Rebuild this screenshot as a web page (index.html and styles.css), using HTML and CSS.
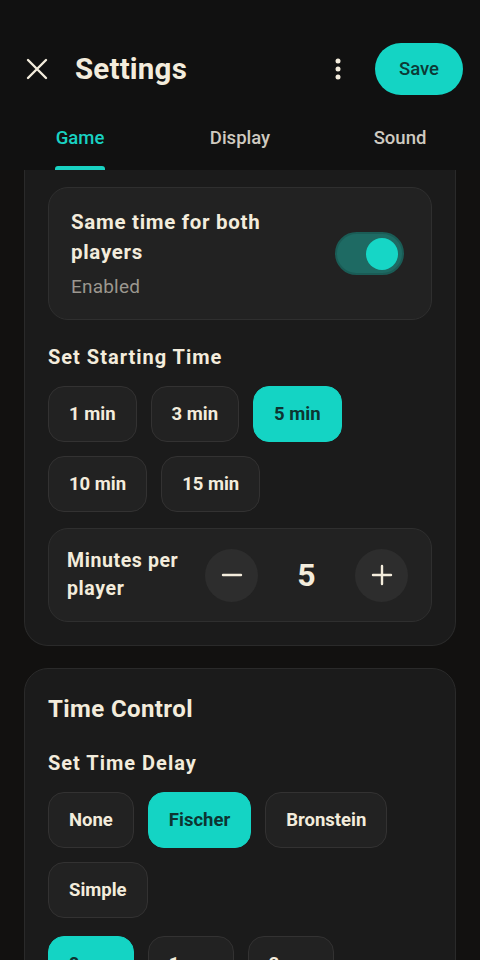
FILE: index.html
```html
<!DOCTYPE html>
<html lang="en">
<head>
  <meta charset="UTF-8" />
  <meta name="viewport" content="width=device-width, initial-scale=1.0" />
  <title>Settings</title>
  <link rel="stylesheet" href="styles.css">
</head>
<body>
  <header>
    <div class="topbar">
      <button class="icon-btn close" aria-label="Close">
        <svg width="22" height="22" viewBox="0 0 22 22"><path d="M2 2L20 20M20 2L2 20" stroke="#f3ecdc" stroke-width="2.4" stroke-linecap="round"/></svg>
      </button>
      <h1>Settings</h1>
      <button class="icon-btn more" aria-label="More">
        <svg width="8" height="24" viewBox="0 0 8 24"><circle cx="4" cy="4" r="2.5" fill="#f3ecdc"/><circle cx="4" cy="12" r="2.5" fill="#f3ecdc"/><circle cx="4" cy="20" r="2.5" fill="#f3ecdc"/></svg>
      </button>
      <button class="save">Save</button>
    </div>
    <nav class="tabs">
      <a class="tab active">Game</a>
      <a class="tab">Display</a>
      <a class="tab">Sound</a>
    </nav>
  </header>

  <main>
    <section class="card clipped">
      <div class="setting-row">
        <div>
          <p class="row-title">Same time for both players</p>
          <p class="row-sub">Enabled</p>
        </div>
        <span class="switch on"><span class="thumb"></span></span>
      </div>

      <h3>Set Starting Time</h3>
      <div class="chips">
        <button class="chip">1 min</button>
        <button class="chip">3 min</button>
        <button class="chip selected">5 min</button>
        <button class="chip">10 min</button>
        <button class="chip">15 min</button>
      </div>

      <div class="stepper">
        <p class="stepper-label">Minutes per player</p>
        <div class="stepper-controls">
          <button class="round" aria-label="Decrease">
            <svg width="22" height="22" viewBox="0 0 22 22"><path d="M2 11H20" stroke="#f3ecdc" stroke-width="2.4" stroke-linecap="round"/></svg>
          </button>
          <span class="value">5</span>
          <button class="round" aria-label="Increase">
            <svg width="22" height="22" viewBox="0 0 22 22"><path d="M2 11H20M11 2V20" stroke="#f3ecdc" stroke-width="2.4" stroke-linecap="round"/></svg>
          </button>
        </div>
      </div>
    </section>

    <section class="card">
      <h2>Time Control</h2>
      <h3>Set Time Delay</h3>
      <div class="chips">
        <button class="chip">None</button>
        <button class="chip selected">Fischer</button>
        <button class="chip">Bronstein</button>
        <button class="chip">Simple</button>
      </div>
      <div class="chips seconds">
        <button class="chip selected">0 sec</button>
        <button class="chip">1 sec</button>
        <button class="chip">2 sec</button>
      </div>
    </section>
  </main>
</body>
</html>
```

FILE: styles.css
```css
* {
  box-sizing: border-box;
}
html, body {
  height: 100%;
}
body {
  font-family: Roboto, "Liberation Sans", sans-serif;
  background-color: #121110;
  color: #f3ecdc;
  margin: 0;
  padding: 0;
  overflow: hidden;
}
button {
  font-family: inherit;
  border: none;
  background: none;
  color: inherit;
  padding: 0;
  cursor: pointer;
}
p, h1, h2, h3 {
  margin: 0;
}

header {
  background-color: #111111;
}
.topbar {
  display: flex;
  align-items: center;
  height: 110px;
  padding: 28px 17px 0 26px;
}
.icon-btn {
  display: flex;
  align-items: center;
  justify-content: center;
}
.close {
  width: 22px;
  height: 22px;
}
.topbar h1 {
  flex: 1;
  margin-left: 27px;
  font-size: 29.5px;
  font-weight: 700;
  letter-spacing: 0.2px;
}
.more {
  width: 24px;
  height: 30px;
  margin-right: 25px;
}
.save {
  width: 88px;
  height: 52px;
  border-radius: 26px;
  background-color: #14d4c4;
  color: #0c3a36;
  font-size: 18.5px;
  font-weight: 500;
}

.tabs {
  display: flex;
  height: 60px;
}
.tab {
  flex: 1;
  display: flex;
  align-items: center;
  justify-content: center;
  position: relative;
  font-size: 18.5px;
  font-weight: 500;
  color: #cfcac0;
  padding-bottom: 4px;
}
.tab.active {
  color: #19d2c2;
}
.tab.active::after {
  content: "";
  position: absolute;
  bottom: 0;
  left: 55px;
  width: 50px;
  height: 4px;
  border-radius: 3px 3px 0 0;
  background-color: #19d2c2;
}

main {
  padding: 0 24px;
}
.card {
  background-color: #1b1b1b;
  border: 1px solid #2a2a2a;
  border-radius: 24px;
  padding: 23px 23px 23px;
  margin-bottom: 22px;
}
.card.clipped {
  border-top: none;
  border-radius: 0 0 24px 24px;
  padding-top: 17px;
}
.card h2 {
  font-size: 24px;
  font-weight: 700;
  line-height: 34px;
  letter-spacing: 0.4px;
}
.card h3 {
  font-size: 20px;
  font-weight: 700;
  line-height: 26px;
  letter-spacing: 1px;
  margin: 24px 0 16px;
}

.setting-row {
  display: flex;
  align-items: center;
  justify-content: space-between;
  background-color: #222222;
  border: 1px solid #2f2f2f;
  border-radius: 20px;
  padding: 19px 27px 19px 22px;
}
.row-title {
  font-size: 20.5px;
  font-weight: 700;
  line-height: 30px;
  letter-spacing: 0.7px;
  max-width: 230px;
}
.row-sub {
  font-size: 19px;
  line-height: 26px;
  margin-top: 7px;
  color: #9b978f;
  letter-spacing: 0.2px;
}
.switch {
  width: 69px;
  height: 43px;
  border-radius: 22px;
  background-color: #1e6a63;
  border: 2px solid #1a5c56;
  display: flex;
  align-items: center;
  justify-content: flex-end;
  padding-right: 4px;
  flex-shrink: 0;
}
.thumb {
  width: 32px;
  height: 32px;
  border-radius: 50%;
  background-color: #16d6c6;
}

.chips {
  display: flex;
  flex-wrap: wrap;
  gap: 14px;
}
.chip {
  height: 56px;
  padding: 0 20px;
  border-radius: 16px;
  background-color: #222222;
  border: 1px solid #333232;
  font-size: 18.5px;
  font-weight: 700;
  color: #f3ecdc;
}
.chip.selected {
  background-color: #14d4c4;
  border-color: #14d4c4;
  color: #0d3532;
}
.chips.seconds {
  margin-top: 18px;
}
.chips.seconds .chip {
  width: 86px;
  padding: 0;
}

.stepper {
  display: flex;
  align-items: center;
  margin-top: 16px;
  background-color: #222222;
  border: 1px solid #2f2f2f;
  border-radius: 20px;
  padding: 18px 23px 18px 18px;
}
.stepper-label {
  flex: 1;
  font-size: 19.5px;
  font-weight: 700;
  line-height: 28px;
  letter-spacing: 0.6px;
}
.stepper-controls {
  display: flex;
  align-items: center;
}
.round {
  width: 53px;
  height: 53px;
  border-radius: 50%;
  background-color: #2d2d2d;
  display: flex;
  align-items: center;
  justify-content: center;
}
.value {
  width: 97px;
  text-align: center;
  font-size: 32px;
  font-weight: 700;
}
```
